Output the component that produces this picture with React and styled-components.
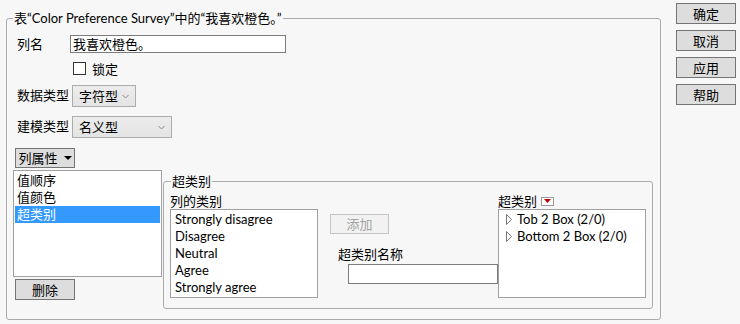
import React from "react";
import styled, { createGlobalStyle } from "styled-components";

const GlobalStyle = createGlobalStyle`
  html, body {
    margin: 0;
    padding: 0;
    background: #f7f7f7;
  }
  body {
    font-family: "Lato", "Noto Sans CJK SC", sans-serif;
    font-size: 13px;
    color: #000;
  }
`;

const Page = styled.div`
  width: 740px;
  height: 324px;
  box-sizing: border-box;
  padding: 0 4px 0 6px;
  display: flex;
  align-items: flex-start;
  gap: 15px;
  background: #f7f7f7;
`;

const Group = styled.fieldset`
  box-sizing: border-box;
  margin: ${(props) => props.margin || "0"};
  padding: ${(props) => props.padding || "0"};
  width: ${(props) => props.width};
  height: ${(props) => props.height};
  border: 1px solid #ababab;
  border-radius: 3px;
  min-width: 0;
  flex-shrink: 0;
`;

const Caption = styled.legend`
  padding: 0 1px;
  margin-left: ${(props) => props.offset || "0"};
  line-height: 16px;
  font-size: 13px;
  white-space: nowrap;
`;

const FieldRow = styled.div`
  display: flex;
  align-items: flex-start;
  margin-top: ${(props) => props.top || "0"};
`;

const Label = styled.div`
  flex-shrink: 0;
  width: 53px;
  padding-left: 4px;
  padding-top: ${(props) => props.pt || "0"};
  line-height: 16px;
  white-space: nowrap;
`;

const TextInput = styled.div`
  box-sizing: border-box;
  flex-shrink: 0;
  width: ${(props) => props.width};
  height: ${(props) => props.height};
  border: 1px solid #7c7c7c;
  background: #fff;
  padding-left: 2px;
  line-height: 16px;
  margin: ${(props) => props.margin || "0"};
`;

const CheckRow = styled.label`
  display: flex;
  align-items: center;
  gap: 6px;
  margin: 9px 0 0 60px;
  height: 13px;
  line-height: 16px;
`;

const CheckBox = styled.span`
  box-sizing: border-box;
  width: 13px;
  height: 13px;
  border: 1px solid #333;
  background: #fff;
`;

const Select = styled.div`
  box-sizing: border-box;
  flex-shrink: 0;
  width: ${(props) => props.width};
  height: 22px;
  margin-left: 2px;
  border: 1px solid #acacac;
  background: linear-gradient(#ececec, #e4e4e4);
  display: flex;
  align-items: center;
  justify-content: space-between;
  padding: 0 6px 0 6px;
  line-height: 16px;
`;

const Button = styled.div`
  box-sizing: border-box;
  width: ${(props) => props.width || "60px"};
  height: ${(props) => props.height || "20px"};
  margin: ${(props) => props.margin || "0"};
  border: 1px solid ${(props) => (props.disabled ? "#c4c4c4" : "#747474")};
  background: ${(props) => (props.disabled ? "#f2f2f2" : "#dddddd")};
  color: ${(props) => (props.disabled ? "#a3a3a3" : "#000")};
  display: flex;
  align-items: center;
  justify-content: center;
  gap: 6px;
  line-height: 16px;
  white-space: nowrap;
`;

const ActionColumn = styled.div`
  display: flex;
  flex-direction: column;
  gap: 6px;
  padding-top: 3px;
`;

const Lower = styled.div`
  display: grid;
  grid-template-columns: 149px 1fr;
  margin-top: 2px;
  width: 639px;
`;

const LeftCol = styled.div`
  display: flex;
  flex-direction: column;
  gap: 2px;
`;

const ListBox = styled.div`
  box-sizing: border-box;
  width: ${(props) => props.width};
  height: ${(props) => props.height};
  border: 1px solid #a0a0a0;
  background: #fff;
  padding: 1px;
`;

const ListItem = styled.div`
  height: 17px;
  line-height: 17px;
  padding-left: ${(props) => props.pl || "2px"};
  background: ${(props) => (props.selected ? "#3399ff" : "transparent")};
  color: ${(props) => (props.selected ? "#fff" : "#000")};
  white-space: nowrap;
  display: flex;
  align-items: center;
  gap: 5px;
`;

const Columns = styled.div`
  display: grid;
  grid-template-columns: 148px 180px 148px;
`;

const Column = styled.div`
  display: flex;
  flex-direction: column;
  align-items: flex-start;
`;

const SmallLabel = styled.div`
  line-height: 16px;
  white-space: nowrap;
  display: flex;
  align-items: center;
  gap: 4px;
  margin: ${(props) => props.margin || "0"};
`;

const MenuIcon = styled.span`
  box-sizing: border-box;
  width: 13px;
  height: 9px;
  border: 1px solid #9a9a9a;
  background: #fff;
  display: flex;
  align-items: center;
  justify-content: center;
`;

function Chevron() {
  return (
    <svg width="7" height="5" viewBox="0 0 7 5">
      <path d="M0.5 1 L3.5 4 L6.5 1" fill="none" stroke="#888" strokeWidth="1" />
    </svg>
  );
}

function Triangle({ color = "#000", w = 8, h = 4 }) {
  return (
    <svg width={w} height={h} viewBox={`0 0 ${w} ${h}`}>
      <polygon points={`0,0 ${w},0 ${w / 2},${h}`} fill={color} />
    </svg>
  );
}

function OpenTriangle() {
  return (
    <svg width="6" height="11" viewBox="0 0 6 11">
      <polygon points="0.5,0.5 5.5,5.5 0.5,10.5" fill="#fff" stroke="#777" strokeWidth="1" />
    </svg>
  );
}

export default function App() {
  return (
    <>
      <GlobalStyle />
      <Page>
        <Group margin="10px 0 0 0" padding="9px 0 0 6px" width="655px" height="310px">
          <Caption>表“Color Preference Survey”中的“我喜欢橙色。”</Caption>
          <FieldRow>
            <Label pt="1px">列名</Label>
            <TextInput width="216px" height="18px">我喜欢橙色。</TextInput>
          </FieldRow>
          <CheckRow>
            <CheckBox />
            锁定
          </CheckRow>
          <FieldRow top="10px">
            <Label pt="2px">数据类型</Label>
            <Select width="64px">
              字符型
              <Chevron />
            </Select>
          </FieldRow>
          <FieldRow top="9px">
            <Label pt="2px">建模类型</Label>
            <Select width="100px">
              名义型
              <Chevron />
            </Select>
          </FieldRow>
          <Button margin="10px 0 0 2px">
            列属性
            <Triangle />
          </Button>
          <Lower>
            <LeftCol>
              <ListBox width="149px" height="107px">
                <ListItem>值顺序</ListItem>
                <ListItem>值颜色</ListItem>
                <ListItem selected>超类别</ListItem>
              </ListBox>
              <Button margin="0 0 0 2px" height="21px">删除</Button>
            </LeftCol>
            <Group margin="3px 0 0 1px" padding="4px 0 0 6px" width="490px" height="136px">
              <Caption offset="1px">超类别</Caption>
              <Columns>
                <Column>
                  <SmallLabel>列的类别</SmallLabel>
                  <ListBox width="148px" height="89px">
                    <ListItem pl="3px">Strongly disagree</ListItem>
                    <ListItem pl="3px">Disagree</ListItem>
                    <ListItem pl="3px">Neutral</ListItem>
                    <ListItem pl="3px">Agree</ListItem>
                    <ListItem pl="3px">Strongly agree</ListItem>
                  </ListBox>
                </Column>
                <Column>
                  <Button disabled width="59px" margin="21px 0 0 12px">添加</Button>
                  <SmallLabel margin="12px 0 0 20px">超类别名称</SmallLabel>
                  <TextInput width="150px" height="20px" margin="2px 0 0 30px" />
                </Column>
                <Column>
                  <SmallLabel>
                    超类别
                    <MenuIcon>
                      <Triangle color="#c00000" w={7} h={4} />
                    </MenuIcon>
                  </SmallLabel>
                  <ListBox width="148px" height="89px">
                    <ListItem pl="6px">
                      <OpenTriangle />
                      Tob 2 Box (2/0)
                    </ListItem>
                    <ListItem pl="6px">
                      <OpenTriangle />
                      Bottom 2 Box (2/0)
                    </ListItem>
                  </ListBox>
                </Column>
              </Columns>
            </Group>
          </Lower>
        </Group>
        <ActionColumn>
          <Button height="21px">确定</Button>
          <Button height="21px">取消</Button>
          <Button height="21px">应用</Button>
          <Button height="21px">帮助</Button>
        </ActionColumn>
      </Page>
    </>
  );
}
